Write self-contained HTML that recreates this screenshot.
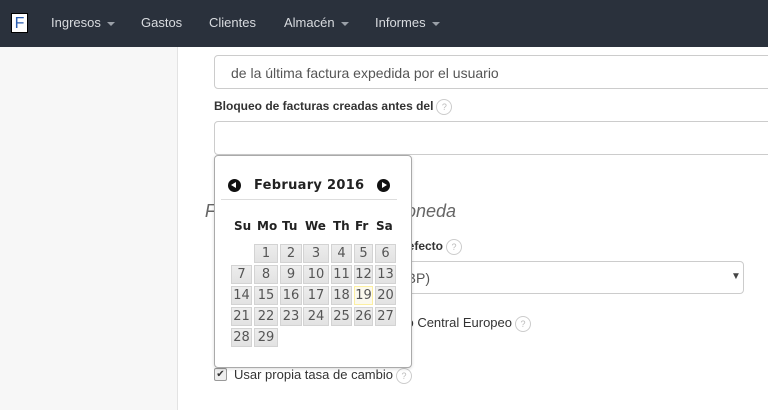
<!DOCTYPE html>
<html><head><meta charset="utf-8"><style>
*{box-sizing:border-box;margin:0;padding:0}
body{width:768px;height:410px;overflow:hidden;background:#fff;font-family:"Liberation Sans",Arial,sans-serif;position:relative;color:#333}
.nav{position:absolute;left:0;top:0;width:768px;height:47px;background:#2a313c}
.nav span{position:absolute;top:15px;color:#d8dbdf;font-size:13px}
.car{display:inline-block;width:0;height:0;border-left:4px solid transparent;border-right:4px solid transparent;border-top:4px solid #9aa0a8;margin-left:6px;vertical-align:middle}
.logo{position:absolute;left:11px;top:13px;width:17px;height:20px;background:#fff;border:1px solid #000;color:#2a5db0;font-size:16px;text-align:center;line-height:19px}
.side{position:absolute;left:0;top:47px;width:178px;height:363px;background:#f7f7f7;border-right:1px solid #e3e3e3}
.abs{position:absolute}
.inp{position:absolute;border:1px solid #ccc;border-radius:4px;background:#fff}
.q{display:inline-block;width:16px;height:16px;border:1px solid #ccc;border-radius:50%;color:#bbb;font-size:9px;text-align:center;line-height:14px;vertical-align:middle;margin-left:3px;font-weight:normal}
.lbl{font-weight:bold;font-size:12px;color:#333}
.cal{position:absolute;left:214px;top:155px;width:198px;height:213px;background:#fff;border:1px solid #aaa;border-radius:4px;box-shadow:0 1px 3px rgba(0,0,0,.15);font-family:"DejaVu Sans",Verdana,sans-serif}
.c{position:absolute;border:1px solid #d3d3d3;color:#555;font-size:13px;text-align:center;line-height:17px;background:linear-gradient(#ededed,#e2e2e2)}
.dn{position:absolute;top:63px;font-weight:bold;font-size:12px;color:#222}
.arr{position:absolute;top:23px;width:13px;height:13px;border-radius:50%;background:#111}
</style></head><body>
<div class="nav">
<div class="logo">F</div>
<span style="left:51px">Ingresos<i class="car"></i></span>
<span style="left:141px">Gastos</span>
<span style="left:209px">Clientes</span>
<span style="left:284px">Almacén<i class="car"></i></span>
<span style="left:375px">Informes<i class="car"></i></span>
</div>
<div class="side"></div>
<div class="inp" style="left:214px;top:55px;width:560px;height:34px"><div class="abs" style="left:16px;top:9px;font-size:14px;color:#555">de la última factura expedida por el usuario</div></div>
<div class="abs lbl" style="left:214px;top:99px">Bloqueo de facturas creadas antes del<span class="q">?</span></div>
<div class="inp" style="left:214px;top:121px;width:560px;height:34px"></div>
<div class="abs" style="right:312px;top:201px;font-size:18px;font-style:italic;color:#666;white-space:nowrap">Formato de números y moneda</div>
<div class="abs lbl" style="right:306px;top:239px;white-space:nowrap">Moneda por defecto<span class="q">?</span></div>
<div class="inp" style="left:214px;top:261px;width:530px;height:33px"><div class="abs" style="right:313px;top:8px;font-size:14px;color:#555;white-space:nowrap">Libra esterlina (GBP)</div><div class="abs" style="left:516px;top:9px;font-size:10px;color:#444">▼</div></div>
<div class="abs" style="right:237px;top:315px;font-size:13px;color:#333;white-space:nowrap">Banco Central Europeo<span class="q">?</span></div>
<div class="abs" style="left:214px;top:368px;width:13px;height:13px;border:1px solid #999;border-radius:2px;background:#eee;font-size:10px;line-height:11px;text-align:center;color:#333">✔</div>
<div class="abs" style="left:234px;top:367px;font-size:13px;color:#333">Usar propia tasa de cambio<span class="q">?</span></div>
<div class="cal">
<div class="arr" style="left:13px;top:23px"><div class="abs" style="left:3px;top:3px;border-top:3.5px solid transparent;border-bottom:3.5px solid transparent;border-right:5px solid #fff"></div></div>
<div class="arr" style="left:162px;top:23px"><div class="abs" style="left:5px;top:3px;border-top:3.5px solid transparent;border-bottom:3.5px solid transparent;border-left:5px solid #fff"></div></div>
<div class="abs" style="left:39px;top:22px;font-size:13px;font-weight:bold;color:#222;letter-spacing:.3px">February 2016</div>
<div class="abs" style="left:6px;top:43px;width:176px;height:1px;background:#ddd"></div>
<div class="dn" style="left:19px">Su</div><div class="dn" style="left:42px">Mo</div><div class="dn" style="left:67px">Tu</div><div class="dn" style="left:90px">We</div><div class="dn" style="left:118px">Th</div><div class="dn" style="left:140px">Fr</div><div class="dn" style="left:161px">Sa</div>
<div id="g"></div>
</div>
<script>
var cols=[[16,21],[39,24],[65,22],[88,26],[116,21],[139,19],[160,21]];
var rows=[88,109,130,151,172];
var h='';var d=1;
for(var r=0;r<5;r++)for(var c=0;c<7;c++){if(r==0&&c==0)continue;if(d>29)break;
var st=d==19?'background:#fbf9ee;border-color:#fcefa1;':'';
h+='<div class="c" style="left:'+cols[c][0]+'px;top:'+rows[r]+'px;width:'+cols[c][1]+'px;height:19px;'+st+'">'+d+'</div>';d++;}
document.getElementById('g').innerHTML=h;
</script>
</body></html>
